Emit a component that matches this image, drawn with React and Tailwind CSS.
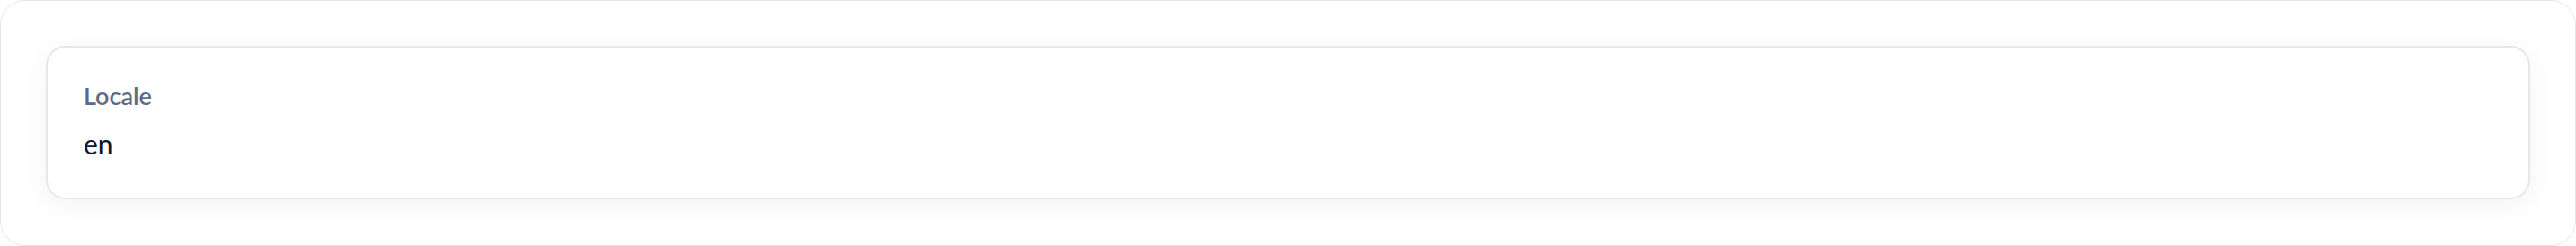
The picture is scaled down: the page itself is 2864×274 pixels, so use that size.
export default function App() {
  return (
    <div className="w-[2864px] h-[274px] bg-white" style={{ fontFamily: 'Lato, "Noto Sans", sans-serif' }}>
      <div className="h-full rounded-[28px] border border-[#e4e4ea] bg-white p-[50px]">
        <div className="h-[171px] rounded-[22px] border-2 border-[#e6e6ec] bg-white px-[40px] pt-[36px] shadow-[0_6px_32px_rgba(15,23,42,0.05)]">
          <div className="text-[27px] leading-[36px] font-semibold text-[#5d6b84]">Locale</div>
          <div className="mt-[17px] text-[30px] leading-[36px] text-[#0f172a]">en</div>
        </div>
      </div>
    </div>
  );
}
